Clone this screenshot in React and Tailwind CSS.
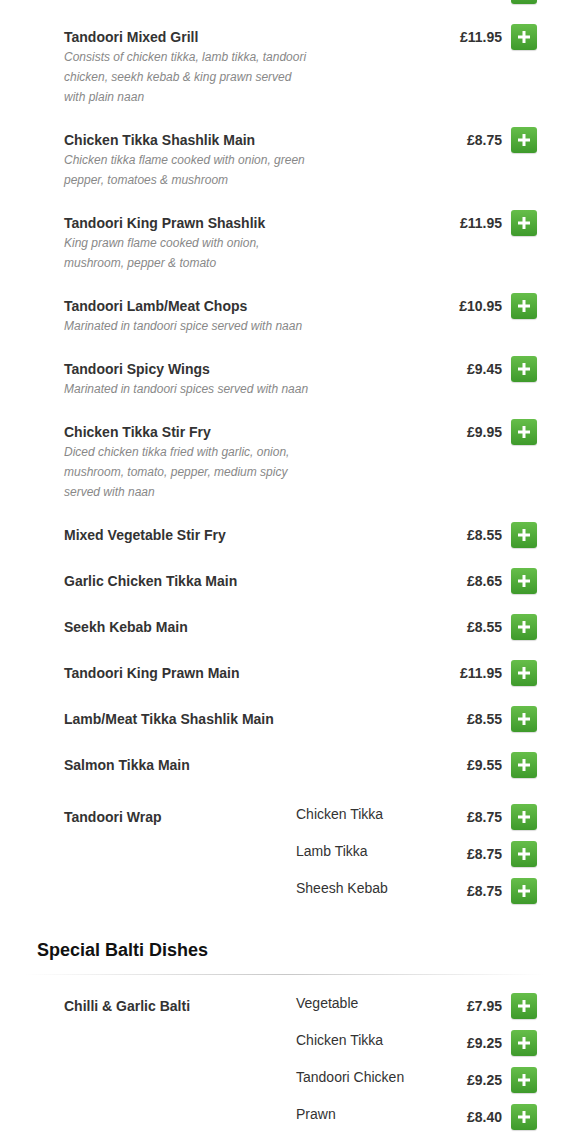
const items = [
  {
    name: "Tandoori Mixed Grill",
    desc: "Consists of chicken tikka, lamb tikka, tandoori chicken, seekh kebab & king prawn served with plain naan",
    price: "£11.95",
  },
  {
    name: "Chicken Tikka Shashlik Main",
    desc: "Chicken tikka flame cooked with onion, green pepper, tomatoes & mushroom",
    price: "£8.75",
  },
  {
    name: "Tandoori King Prawn Shashlik",
    desc: "King prawn flame cooked with onion, mushroom, pepper & tomato",
    price: "£11.95",
  },
  {
    name: "Tandoori Lamb/Meat Chops",
    desc: "Marinated in tandoori spice served with naan",
    price: "£10.95",
  },
  {
    name: "Tandoori Spicy Wings",
    desc: "Marinated in tandoori spices served with naan",
    price: "£9.45",
  },
  {
    name: "Chicken Tikka Stir Fry",
    desc: "Diced chicken tikka fried with garlic, onion, mushroom, tomato, pepper, medium spicy served with naan",
    price: "£9.95",
  },
  { name: "Mixed Vegetable Stir Fry", price: "£8.55" },
  { name: "Garlic Chicken Tikka Main", price: "£8.65" },
  { name: "Seekh Kebab Main", price: "£8.55" },
  { name: "Tandoori King Prawn Main", price: "£11.95" },
  { name: "Lamb/Meat Tikka Shashlik Main", price: "£8.55" },
  { name: "Salmon Tikka Main", price: "£9.55" },
];

const wrapOptions = [
  { label: "Chicken Tikka", price: "£8.75" },
  { label: "Lamb Tikka", price: "£8.75" },
  { label: "Sheesh Kebab", price: "£8.75" },
];

const baltiOptions = [
  { label: "Vegetable", price: "£7.95" },
  { label: "Chicken Tikka", price: "£9.25" },
  { label: "Tandoori Chicken", price: "£9.25" },
  { label: "Prawn", price: "£8.40" },
];

const AddButton = () => (
  <button className="w-[26px] h-[26px] shrink-0 rounded-[3px] bg-gradient-to-b from-[#66be4a] to-[#3e9a2b] flex items-center justify-center shadow-[0_1px_1px_rgba(0,0,0,0.15)]">
    <svg width="14" height="14" viewBox="0 0 14 14">
      <path d="M7 1v12M1 7h12" stroke="#fff" strokeWidth="3" />
    </svg>
  </button>
);

const Price = ({ value }) => (
  <div className="pt-[3px] text-[14px] leading-5 font-bold text-[#333] text-right mr-[9px]">
    {value}
  </div>
);

const MenuItem = ({ item }) => (
  <div className="flex items-start pl-[64px] pr-[33px] py-[10px]">
    <div className="flex-1 min-w-0 pt-[3px]">
      <div className="text-[14px] leading-5 font-bold text-[#333]">{item.name}</div>
      {item.desc && (
        <div className="max-w-[248px] text-[12px] leading-5 italic text-[#888]">
          {item.desc}
        </div>
      )}
    </div>
    <Price value={item.price} />
    <AddButton />
  </div>
);

const GroupItem = ({ name, options, top }) => (
  <div className={`flex items-start pl-[64px] pr-[33px] pb-[10px] ${top}`}>
    <div className="w-[232px] shrink-0 pt-[3px] text-[14px] leading-5 font-bold text-[#333]">
      {name}
    </div>
    <div className="flex-1 flex flex-col gap-[11px]">
      {options.map((o) => (
        <div key={o.label} className="flex items-start">
          <div className="flex-1 text-[14px] leading-5 text-[#333]">{o.label}</div>
          <Price value={o.price} />
          <AddButton />
        </div>
      ))}
    </div>
  </div>
);

export default function App() {
  return (
    <div
      className="min-h-screen bg-white overflow-hidden"
      style={{ fontFamily: '"Liberation Sans", Arial, sans-serif' }}
    >
      <div className="-mt-[32px]">
        {/* previous item, scrolled off the top: only its button edge shows */}
        <div className="flex justify-end pr-[33px] py-[10px]">
          <AddButton />
        </div>
        {items.map((item) => (
          <MenuItem key={item.name} item={item} />
        ))}
        <GroupItem name="Tandoori Wrap" options={wrapOptions} top="pt-[16px]" />

        <div className="mt-[24px] pl-[37px] pb-[12px]">
          <h2 className="text-[18px] leading-6 font-bold text-[#111]">Special Balti Dishes</h2>
        </div>
        <div className="mx-[25px] h-px bg-gradient-to-r from-transparent via-[#c8c8c8] to-transparent" />

        <GroupItem name="Chilli & Garlic Balti" options={baltiOptions} top="pt-[18px]" />
      </div>
    </div>
  );
}
